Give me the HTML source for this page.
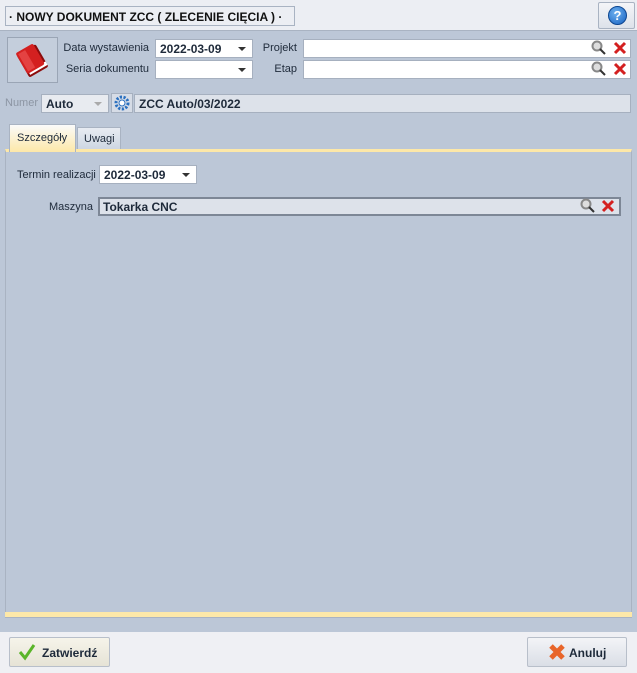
<!DOCTYPE html>
<html><head><meta charset="utf-8"><style>
*{box-sizing:border-box;margin:0;padding:0}
body{width:637px;height:673px;background:#bcc7d7;font-family:"Liberation Sans",sans-serif;font-size:11px;color:#1e2a3a;position:relative;overflow:hidden}
.a{position:absolute}
.inp{position:absolute;background:#fff;border:1px solid #a6b0bf;height:19px;font-weight:bold;padding:3px 4px;font-size:12px;line-height:12px}
.arr{position:absolute;right:6px;top:7px;width:0;height:0;border-left:4px solid transparent;border-right:4px solid transparent;border-top:4px solid #333}
.lbl{position:absolute;color:#1e2a3a;text-align:right;white-space:nowrap}
</style></head><body>
<div class="a" style="left:0;top:0;width:637px;height:31px;background:#eceef3;border-bottom:1px solid #a9b3c2"></div>
<div class="a" style="left:5px;top:6px;width:290px;height:20px;border:1px solid #a9b3c2;font-weight:bold;font-size:12px;padding:3px 3px;color:#111;white-space:nowrap;overflow:hidden">· NOWY DOKUMENT ZCC ( ZLECENIE CIĘCIA ) ·</div>
<div class="a" style="left:598px;top:2px;width:37px;height:27px;border:1px solid #a9b3c2;background:linear-gradient(#f4f5f8,#dde2ea);border-radius:2px"><div class="a" style="left:9px;top:3px;width:19px;height:19px;border-radius:50%;background:radial-gradient(circle at 40% 35%,#6fb2f0,#1560c0);border:1px solid #0d4690;color:#fff;font-weight:bold;text-align:center;line-height:17px;font-size:13px">?</div></div>

<div class="a" style="left:7px;top:37px;width:51px;height:46px;border:1px solid #9aa5b5;background:#c4cedc">
<svg width="49" height="44" viewBox="0 0 49 44"><g transform="rotate(-30 24 22)"><rect x="13" y="10" width="22" height="26" rx="2" fill="#8c0c0c"/><rect x="15" y="30" width="20" height="4" fill="#fff"/><rect x="13" y="8" width="20" height="24" rx="2" fill="#d42020"/><rect x="15" y="10" width="8" height="20" fill="#ee5a5a" opacity=".6"/></g></svg></div>

<div class="lbl" style="right:488px;top:42px">Data wystawienia</div>
<div class="inp" style="left:155px;top:39px;width:98px">2022-03-09<div class="arr"></div></div>
<div class="lbl" style="right:488px;top:63px">Seria dokumentu</div>
<div class="inp" style="left:155px;top:60px;width:98px"><div class="arr"></div></div>
<div class="lbl" style="right:340px;top:42px">Projekt</div>
<div class="inp" style="left:303px;top:39px;width:328px"></div>
<div class="lbl" style="right:340px;top:63px">Etap</div>
<div class="inp" style="left:303px;top:60px;width:328px"></div>
<svg class="a" style="left:591px;top:40px" width="40" height="40"><g stroke-width="2"><circle cx="6" cy="6" r="4.5" fill="#ddd" stroke="#888"/><line x1="9" y1="9" x2="14" y2="14" stroke="#333"/><circle cx="6" cy="27" r="4.5" fill="#ddd" stroke="#888"/><line x1="9" y1="30" x2="14" y2="35" stroke="#333"/></g><g stroke="#d42020" stroke-width="3"><path d="M24 3l10 10M34 3L24 13M24 24l10 10M34 24L24 34"/></g></svg>

<div class="lbl" style="left:5px;top:97px;color:#8c95a3">Numer</div>
<div class="inp" style="left:41px;top:94px;width:68px;background:#e8ebf0">Auto<div class="arr" style="border-top-color:#aaa"></div></div>
<div class="a" style="left:111px;top:93px;width:22px;height:20px;border:1px solid #a6b0bf;background:#d6dce6"><svg width="20" height="18"><circle cx="10" cy="9" r="6" fill="none" stroke="#2a70c0" stroke-width="3" stroke-dasharray="2.2 1.5"/><circle cx="10" cy="9" r="3" fill="#fff" stroke="#2a70c0"/></svg></div>
<div class="inp" style="left:134px;top:94px;width:497px;background:#dde2ea">ZCC Auto/03/2022</div>

<div class="a" style="left:77px;top:127px;width:44px;height:23px;border:1px solid #a9b3c2;border-bottom:none;background:linear-gradient(#e8ecf2,#ccd5e2);padding:5px 6px">Uwagi</div>
<div class="a" style="left:5px;top:149px;width:627px;height:469px;border:1px solid #a9b3c2;border-top:3px solid #fde8a8;background:#bcc7d7"></div>
<div class="a" style="left:5px;top:612px;width:627px;height:5px;background:#fde8a8"></div>
<div class="a" style="left:9px;top:124px;width:67px;height:28px;border:1px solid #a9b3c2;border-bottom:none;background:linear-gradient(#fafafa,#fde8a8);padding:7px 7px">Szczegóły</div>

<div class="lbl" style="left:17px;top:169px">Termin realizacji</div>
<div class="inp" style="left:99px;top:165px;width:98px">2022-03-09<div class="arr"></div></div>
<div class="lbl" style="right:544px;top:201px">Maszyna</div>
<div class="inp" style="left:98px;top:197px;width:523px;background:#dde2ea;border:2px solid #7d8796;padding:2px 3px">Tokarka CNC</div>
<svg class="a" style="left:580px;top:198px" width="40" height="18"><g stroke-width="2"><circle cx="6" cy="6" r="4.5" fill="#ddd" stroke="#888"/><line x1="9" y1="9" x2="14" y2="14" stroke="#333"/></g><path d="M23 3l10 10M33 3L23 13" stroke="#d42020" stroke-width="3"/></svg>

<div class="a" style="left:0;top:632px;width:637px;height:41px;background:#eff0f4"></div>
<div class="a" style="left:9px;top:637px;width:101px;height:30px;border:1px solid #b8bfca;border-radius:2px;background:linear-gradient(#f6f4ea,#e6e3d6);padding:8px 0 0 32px;font-weight:bold;font-size:12px">Zatwierdź</div>
<svg class="a" style="left:18px;top:643px" width="18" height="18"><path d="M2 9l5 6L16 2" fill="none" stroke="#5ab52a" stroke-width="3"/></svg>
<div class="a" style="left:527px;top:637px;width:100px;height:30px;border:1px solid #b8bfca;border-radius:2px;background:linear-gradient(#f3f4f7,#dadee6);padding:8px 0 0 41px;font-weight:bold;font-size:12px">Anuluj</div>
<svg class="a" style="left:548px;top:643px" width="18" height="18"><path d="M3 3l12 12M15 3L3 15" stroke="#e8652a" stroke-width="5"/></svg>
</body></html>
